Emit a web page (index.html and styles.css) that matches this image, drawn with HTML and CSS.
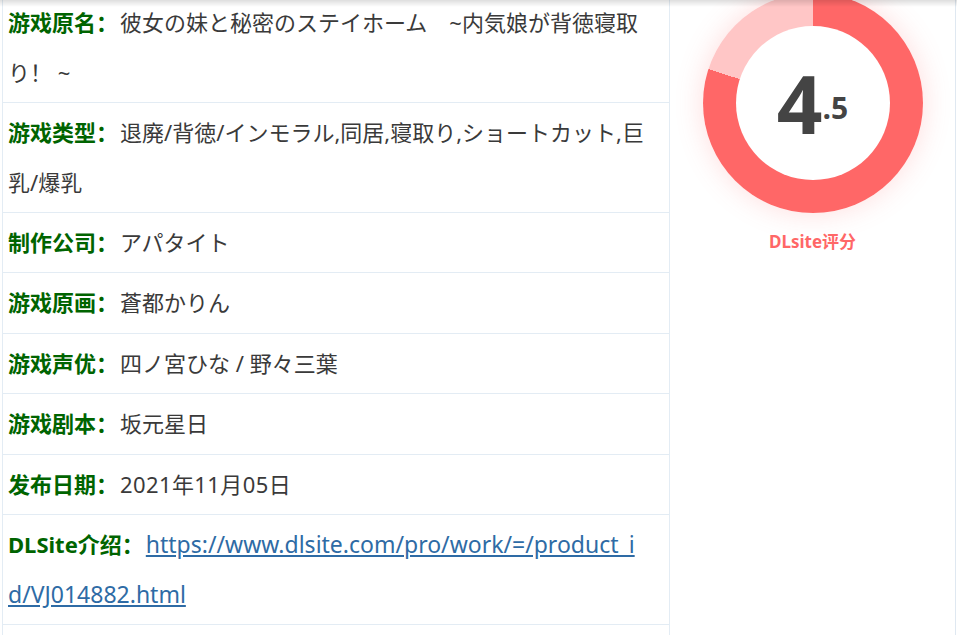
FILE: index.html
```html
<!DOCTYPE html>
<html lang="zh">
<head>
<meta charset="utf-8">
<title>游戏信息</title>
<link rel="stylesheet" href="styles.css">
</head>
<body>
<div class="page">
  <div class="info">
    <p class="row"><span class="label">游戏原名：</span><span class="value">彼女の妹と秘密のステイホーム　~内気娘が背徳寝取り！ ~</span></p>
    <p class="row"><span class="label">游戏类型：</span><span class="value">退廃/背徳/インモラル,同居,寝取り,ショートカット,巨乳/爆乳</span></p>
    <p class="row"><span class="label">制作公司：</span><span class="value">アパタイト</span></p>
    <p class="row"><span class="label">游戏原画：</span><span class="value">蒼都かりん</span></p>
    <p class="row"><span class="label">游戏声优：</span><span class="value">四ノ宮ひな / 野々三葉</span></p>
    <p class="row"><span class="label">游戏剧本：</span><span class="value">坂元星日</span></p>
    <p class="row"><span class="label">发布日期：</span><span class="value date">2021年11月05日</span></p>
    <p class="row row-link"><span class="label">DLSite介绍：</span><a class="link" href="#">https://www.dlsite.com/pro/work/=/product_id/VJ014882.html</a></p>
    <p class="row empty"></p>
  </div>
  <aside class="score">
    <div class="ring">
      <div class="ring-inner"><span class="big">4</span><span class="small">.5</span></div>
    </div>
    <div class="score-label">DLsite评分</div>
  </aside>
</div>
</body>
</html>
```
FILE: styles.css
```css
html, body {
  margin: 0;
  padding: 0;
  background: #fff;
  overflow: hidden;
}
body {
  font-family: "Noto Sans", "Noto Sans CJK SC", sans-serif;
  color: #3a3a3a;
}
body::before {
  content: "";
  position: fixed;
  left: 0;
  top: 0;
  right: 0;
  height: 7px;
  background: linear-gradient(to bottom, rgba(0,0,0,0.13), rgba(0,0,0,0));
  z-index: 5;
}
.page {
  display: flex;
  margin: -7px 0 0 2px;
  width: 954px;
  min-height: 700px;
  border-right: 1px solid #dfe8f1;
  border-left: 1px solid #e3ecf4;
  box-sizing: border-box;
}
.info {
  width: 667px;
  flex: none;
  border-right: 1px solid #e3ecf4;
  box-sizing: border-box;
}
.row {
  margin: 0;
  padding: 5px 5px 4.8px 5px;
  line-height: 49.6px;
  font-size: 22px;
  border-bottom: 1px solid #e3ecf4;
  word-break: break-all;
}
.row-link {
  padding-right: 20px;
}
.row.empty {
  border-bottom: none;
  height: 60px;
}
.label {
  font-weight: bold;
  color: #006400;
  margin-right: 2px;
}
.date {
  letter-spacing: 0.4px;
}
.link {
  color: #2e6ba5;
  text-decoration: underline;
  font-size: 23px;
}
.score {
  flex: 1;
  display: flex;
  flex-direction: column;
  align-items: center;
}
.ring {
  width: 220px;
  height: 220px;
  border-radius: 50%;
  background: conic-gradient(#ff6767 0deg 288deg, #ffc6c6 288deg 360deg);
  box-shadow: 0 0 28px rgba(255, 102, 102, 0.22);
  display: flex;
  align-items: center;
  justify-content: center;
}
.ring-inner {
  width: 154px;
  height: 154px;
  border-radius: 50%;
  background: #fff;
  text-align: center;
  color: #444;
  font-weight: bold;
  line-height: 154px;
  font-family: "Open Sans", "Noto Sans", sans-serif;
}
.big {
  font-size: 80px;
}
.small {
  font-size: 30px;
  vertical-align: 15px;
}
.score-label {
  margin-top: 19px;
  font-size: 17px;
  line-height: 20px;
  font-weight: bold;
  color: #ff6767;
}
```
